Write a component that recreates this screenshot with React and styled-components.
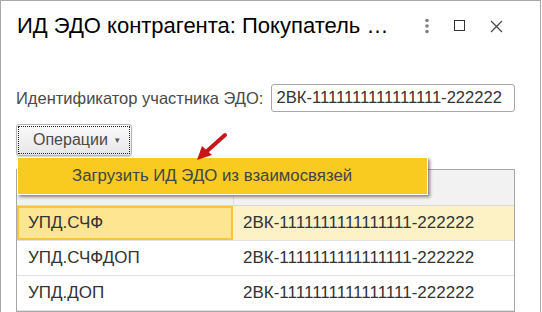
import React from "react";
import styled, { createGlobalStyle } from "styled-components";

const GlobalStyle = createGlobalStyle`
  body {
    margin: 0;
    background: #fff;
    font-family: "Liberation Sans", Arial, sans-serif;
  }
`;

const rows = [
    { kind: "УПД.СЧФ", id: "2ВК-1111111111111111-222222", selected: true },
    { kind: "УПД.СЧФДОП", id: "2ВК-1111111111111111-222222" },
    { kind: "УПД.ДОП", id: "2ВК-1111111111111111-222222" },
];

export default function App() {
    return (
        <>
            <GlobalStyle />
            <Window>
                <TitleBar>
                    <Title>ИД ЭДО контрагента: Покупатель …</Title>
                    <Controls>
                        <svg width="6" height="16" viewBox="0 0 6 16">
                            <circle cx="3" cy="2.5" r="1.8" fill="#808080" />
                            <circle cx="3" cy="8" r="1.8" fill="#808080" />
                            <circle cx="3" cy="13.5" r="1.8" fill="#808080" />
                        </svg>
                        <svg width="12" height="12" viewBox="0 0 12 12">
                            <rect x="0.5" y="0.5" width="10" height="10" fill="none" stroke="#333" strokeWidth="1" />
                        </svg>
                        <svg width="13" height="13" viewBox="0 0 13 13">
                            <path d="M1 1 L12 12 M12 1 L1 12" stroke="#444" strokeWidth="1.2" />
                        </svg>
                    </Controls>
                </TitleBar>
                <Body>
                    <FieldRow>
                        <Label>Идентификатор участника ЭДО:</Label>
                        <Input>2ВК-1111111111111111-222222</Input>
                    </FieldRow>
                    <Toolbar>
                        <OpsButton>
                            <Focus>
                                Операции <Caret>▾</Caret>
                            </Focus>
                        </OpsButton>
                        <Menu>
                            <MenuItem>Загрузить ИД ЭДО из взаимосвязей</MenuItem>
                        </Menu>
                        <Pointer width="40" height="40" viewBox="0 0 40 40">
                            <path d="M31 3 L12 20" stroke="#c8161d" strokeWidth="4" strokeLinecap="round" />
                            <polygon points="3,28 8,14 18,23" fill="#c8161d" />
                        </Pointer>
                    </Toolbar>
                    <Table>
                        <HeadRow>
                            <HeadCell $width={216} />
                            <HeadCell />
                        </HeadRow>
                        {rows.map((r) => (
                            <Row key={r.kind}>
                                <Cell $width={216} $selected={r.selected} $current={r.selected}>
                                    {r.kind}
                                </Cell>
                                <Cell $selected={r.selected}>{r.id}</Cell>
                            </Row>
                        ))}
                    </Table>
                </Body>
            </Window>
        </>
    );
}

const Window = styled.div`
  width: 539px;
  height: 311px;
  border: 1px solid #a8a8a8;
  border-bottom: none;
  background: #fff;
  overflow: hidden;
`;

const TitleBar = styled.div`
  display: flex;
  align-items: center;
  height: 50px;
  padding-left: 16px;
`;

const Title = styled.div`
  flex: 1;
  font-size: 22px;
  color: #000;
  white-space: nowrap;
`;

const Controls = styled.div`
  display: flex;
  align-items: center;
  gap: 24px;
  padding-right: 37px;
  svg {
    display: block;
  }
`;

const Body = styled.div`
  padding: 0 24px 0 15px;
`;

const FieldRow = styled.div`
  display: flex;
  align-items: center;
  gap: 8px;
  margin-top: 33px;
`;

const Label = styled.div`
  font-size: 16.5px;
  color: #4a4a4a;
  white-space: nowrap;
`;

const Input = styled.div`
  width: 238px;
  height: 26px;
  border: 1px solid #a8a8a8;
  border-radius: 3px;
  padding-left: 4px;
  font-size: 16.6px;
  line-height: 26px;
  color: #333;
  white-space: nowrap;
  overflow: hidden;
`;

const Toolbar = styled.div`
  position: relative;
  margin-top: 12px;
  height: 32px;
`;

const OpsButton = styled.div`
  width: 112px;
  height: 28px;
  border: 1px solid #b5b5b5;
  border-radius: 3px;
  background: linear-gradient(#fafafa, #e6e6e6);
  box-shadow: 0 1px 1px rgba(0, 0, 0, 0.15);
  padding: 1px;
  box-sizing: content-box;
`;

const Focus = styled.div`
  height: 26px;
  border: 1px dotted #222;
  display: flex;
  align-items: center;
  padding-left: 14px;
  font-size: 16px;
  color: #4a4a4a;
`;

const Caret = styled.span`
  font-size: 9px;
  margin-left: 7px;
  color: #555;
`;

const Menu = styled.div`
  position: absolute;
  top: 33px;
  left: 1px;
  width: 409px;
  height: 36px;
  background: #f9cb21;
  border: 1px solid #fff;
  box-shadow: 2px 2px 3px rgba(0, 0, 0, 0.45);
  z-index: 2;
  display: flex;
  align-items: center;
`;

const MenuItem = styled.div`
  padding-left: 54px;
  font-size: 16.8px;
  color: #444;
`;

const Pointer = styled.svg`
  position: absolute;
  left: 178px;
  top: 8px;
  z-index: 3;
`;

const Table = styled.div`
  margin-top: 13px;
  width: 497px;
  border: 1px solid #a8a8a8;
`;

const HeadRow = styled.div`
  display: flex;
  height: 35px;
  background: #f2f2f2;
  border-bottom: 1px solid #d8d8d8;
`;

const HeadCell = styled.div`
  ${(p) => (p.$width ? `width: ${p.$width}px;` : "flex: 1;")}
  border-right: 1px solid #dedede;
  &:last-child {
    border-right: none;
  }
`;

const Row = styled.div`
  display: flex;
  height: 34px;
  border-bottom: 1px solid #e2e2e2;
`;

const Cell = styled.div`
  ${(p) => (p.$width ? `width: ${p.$width}px;` : "flex: 1;")}
  box-sizing: border-box;
  display: flex;
  align-items: center;
  padding-left: ${(p) => (p.$width ? "11px" : "10px")};
  font-size: 17px;
  color: #333;
  white-space: nowrap;
  background: ${(p) => (p.$selected ? (p.$current ? "#fde592" : "#fdf1c6") : "#fff")};
  border: ${(p) => (p.$current ? "2px solid #f8c43a" : "none")};
  ${(p) => p.$current && "padding-left: 9px;"}
`;
